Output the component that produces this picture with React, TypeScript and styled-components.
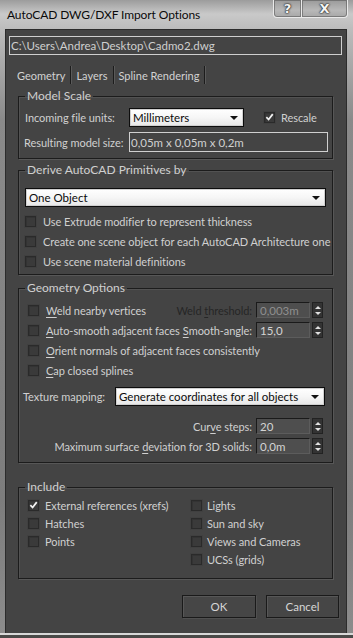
import React from "react";
import styled, { createGlobalStyle } from "styled-components";

const FONT = `Lato, "Noto Sans", sans-serif`;

const Global = createGlobalStyle`
  html, body { margin: 0; padding: 0; background: #4a4a48; }
  body { font-family: ${FONT}; }
  * { box-sizing: border-box; }
`;

const Window = styled.div`
  width: 353px;
  height: 635px;
  background: linear-gradient(180deg, #9c9c9c 0px, #c9c9c9 14px, #bcbcbc 29px, #8a8a8a 120px, #7d7d7d 500px, #8c8c8c 635px);
  border-bottom: 2px solid #d8d8d8;
  display: flex;
  flex-direction: column;
`;

const TitleBar = styled.div`
  height: 29px;
  display: flex;
  align-items: flex-start;
  justify-content: space-between;
  padding-left: 7px;
  flex-shrink: 0;
`;

const Title = styled.div`
  font-family: ${FONT};
  font-size: 12px;
  color: #0a0a0a;
  padding-top: 7px;
  letter-spacing: -0.1px;
`;

const Caps = styled.div`
  display: flex;
  margin-right: 5px;
`;

const CapButton = styled.div<{ $w: number; $right?: boolean }>`
  width: ${(p) => p.$w}px;
  height: 18px;
  border: 1px solid #e9e9e9;
  border-top: none;
  border-left: ${(p) => (p.$right ? "none" : "1px solid #e9e9e9")};
  border-radius: ${(p) => (p.$right ? "0 0 4px 0" : "0 0 0 4px")};
  background: linear-gradient(180deg, #9a9a9a, #b8b8b8 60%, #a8a8a8);
  box-shadow: inset 0 0 0 1px rgba(90, 90, 90, 0.6);
  display: flex;
  align-items: center;
  justify-content: center;
  font-family: "DejaVu Sans", sans-serif;
  font-weight: bold;
  font-size: 13px;
  color: #f4f4f4;
  text-shadow: 0 0 1px #222, 0 0 2px #333, 0 0 2px #333;
`;

const Client = styled.div`
  flex: 1;
  margin: 0 6px 0 5px;
  background: #444444;
  border: 1px solid #2c2c2c;
  border-bottom: none;
  display: flex;
  flex-direction: column;
  padding: 6px 4px 0 3px;
  font-family: ${FONT};
  font-size: 11px;
  color: #d2d2d2;
`;

const PathField = styled.div`
  height: 19px;
  border: 1px solid #cfcfcf;
  padding: 0 0 0 1px;
  display: flex;
  align-items: center;
  color: #cfcfcf;
  font-size: 11.5px;
`;

const TabRow = styled.div`
  display: flex;
  height: 20px;
  margin-top: 10px;
  margin-left: 5px;
  align-items: center;
`;

const Tab = styled.div<{ $first?: boolean }>`
  height: 18px;
  display: flex;
  align-items: center;
  padding: 0 5px 0 ${(p) => (p.$first ? 3 : 5)}px;
  border-right: 1px solid #1c1c1c;
  box-shadow: 1px 0 0 #5a5a5a;
  color: #d2d2d2;
  font-size: 11px;
`;

const Panel = styled.div`
  display: flex;
  flex-direction: column;
  padding: 0 9px 0 9px;
`;

const Group = styled.fieldset<{ $mt: number; $pt: number; $pb: number }>`
  margin: ${(p) => p.$mt}px 0 0 0;
  border: 1px solid #1c1c1c;
  box-shadow: 1px 1px 0 #575757, inset 1px 1px 0 #525252;
  padding: ${(p) => p.$pt}px 4px ${(p) => p.$pb}px 4px;
  min-width: 0;
  display: flex;
  flex-direction: column;
`;

const Legend = styled.legend`
  font-family: ${FONT};
  font-size: 12px;
  line-height: 14px;
  color: #d0d0d0;
  padding: 0 2px;
  margin-left: 2px;
`;

const Row = styled.div<{ $h?: number; $mt?: number; $pl?: number; $end?: boolean }>`
  display: flex;
  align-items: center;
  height: ${(p) => p.$h ?? 20}px;
  margin-top: ${(p) => p.$mt ?? 0}px;
  padding-left: ${(p) => p.$pl ?? 0}px;
  ${(p) => (p.$end ? "justify-content: flex-end; padding-right: 5px;" : "")}
  white-space: nowrap;
`;

const Label = styled.span<{ $w?: number; $grow?: boolean; $right?: boolean; $disabled?: boolean }>`
  ${(p) => (p.$w ? `width: ${p.$w}px; flex-shrink: 0;` : "")}
  ${(p) => (p.$grow ? "flex: 1;" : "")}
  ${(p) => (p.$right ? "text-align: right; padding-right: 4px;" : "")}
  color: ${(p) => (p.$disabled ? "#262626" : "#d0d0d0")};
  font-size: 11px;
  letter-spacing: -0.06px;
  u { text-decoration-thickness: 1px; text-underline-offset: 2px; }
`;

const Spacer = styled.span<{ $w: number }>`
  width: ${(p) => p.$w}px;
  flex-shrink: 0;
`;

const Select = styled.div<{ $w?: number; $h?: number; $mr?: number }>`
  ${(p) => (p.$w ? `width: ${p.$w}px;` : "flex: 1;")}
  height: ${(p) => p.$h ?? 19}px;
  margin-right: ${(p) => p.$mr ?? 0}px;
  background: linear-gradient(180deg, #ffffff 0%, #f6f6f6 50%, #e6e6e6 100%);
  border: 1px solid #0d0d0d;
  box-shadow: inset 0 0 0 1px #cfcfcf;
  display: flex;
  align-items: center;
  justify-content: space-between;
  padding: 0 5px 0 3px;
  color: #0a0a0a;
  font-size: 11.5px;
  flex-shrink: 0;
`;

const Caret = styled.span`
  width: 0;
  height: 0;
  border-left: 4px solid transparent;
  border-right: 4px solid transparent;
  border-top: 4px solid #111;
  margin-top: 1px;
`;

const OutlineField = styled.div`
  flex: 1;
  height: 20px;
  border: 1px solid #d0d0d0;
  display: flex;
  align-items: center;
  padding-left: 1px;
  color: #d0d0d0;
  font-size: 11.5px;
`;

const BoxWrap = styled.span<{ $mr: number }>`
  width: 11px;
  height: 11px;
  flex-shrink: 0;
  margin-right: ${(p) => p.$mr}px;
  background: #3a3a3a;
  border: 1px solid #2a2a2a;
  box-shadow: inset 1px 1px 0 #333, 0 0 0 1px #404040;
  display: flex;
  align-items: center;
  justify-content: center;
`;

const Check = ({ checked, mr = 7 }: { checked?: boolean; mr?: number }) => (
  <BoxWrap $mr={mr}>
    {checked && (
      <svg width="10" height="10" viewBox="0 0 10 10">
        <path d="M1.5 5.2 L4 7.8 L8.6 1.8" fill="none" stroke="#f2f2f2" strokeWidth="1.9" />
      </svg>
    )}
  </BoxWrap>
);

const NumField = styled.div<{ $dim?: boolean }>`
  width: 54px;
  height: 16px;
  flex-shrink: 0;
  background: #4e4e4e;
  border: 1px solid #1a1a1a;
  border-right-color: #5c5c5c;
  border-bottom-color: #5c5c5c;
  display: flex;
  align-items: center;
  padding-left: 3px;
  color: ${(p) => (p.$dim ? "#8e8e8e" : "#d4d4d4")};
  font-size: 11.5px;
`;

const SpinBox = styled.div`
  width: 11px;
  height: 16px;
  margin-left: 2px;
  flex-shrink: 0;
  background: #333;
  border: 1px solid #222;
  display: flex;
  flex-direction: column;
  align-items: center;
  justify-content: space-around;
  padding: 1px 0;
`;

const Arrow = styled.span<{ $up?: boolean }>`
  width: 0;
  height: 0;
  border-left: 3px solid transparent;
  border-right: 3px solid transparent;
  ${(p) => (p.$up ? "border-bottom: 3px solid #e0e0e0;" : "border-top: 3px solid #e0e0e0;")}
`;

const Spinner = ({ value, dim }: { value: string; dim?: boolean }) => (
  <>
    <NumField $dim={dim}>{value}</NumField>
    <SpinBox>
      <Arrow $up />
      <Arrow />
    </SpinBox>
  </>
);

const Columns = styled.div`
  display: flex;
  padding-left: 5px;
`;

const Column = styled.div<{ $w?: number }>`
  display: flex;
  flex-direction: column;
  ${(p) => (p.$w ? `width: ${p.$w}px;` : "flex: 1;")}
`;

const ButtonRow = styled.div`
  display: flex;
  justify-content: flex-end;
  gap: 10px;
  margin-top: 16px;
  padding-right: 3px;
`;

const Button = styled.div<{ $w: number }>`
  width: ${(p) => p.$w}px;
  height: 23px;
  border: 1px solid #1a1a1a;
  box-shadow: inset 1px 1px 0 #575757, 1px 1px 0 #505050;
  background: #464646;
  display: flex;
  align-items: center;
  justify-content: center;
  color: #d6d6d6;
  font-size: 11.5px;
`;

export default function App() {
  return (
    <>
      <Global />
      <Window>
        <TitleBar>
          <Title>AutoCAD DWG/DXF Import Options</Title>
          <Caps>
            <CapButton $w={29}>?</CapButton>
            <CapButton $w={46} $right>
              X
            </CapButton>
          </Caps>
        </TitleBar>
        <Client>
          <PathField>C:\Users\Andrea\Desktop\Cadmo2.dwg</PathField>
          <TabRow>
            <Tab $first>Geometry</Tab>
            <Tab>Layers</Tab>
            <Tab>Spline Rendering</Tab>
          </TabRow>
          <Panel>
            <Group $mt={4} $pt={4} $pb={6}>
              <Legend>Model Scale</Legend>
              <Row $pl={2}>
                <Label $w={104}>Incoming file units:</Label>
                <Select $w={115} $h={19}>
                  Millimeters
                  <Caret />
                </Select>
                <Spacer $w={20} />
                <Check checked mr={6} />
                <Label>Rescale</Label>
              </Row>
              <Row $mt={5} $pl={1}>
                <Label $w={105}>Resulting model size:</Label>
                <OutlineField>0,05m x 0,05m x 0,2m</OutlineField>
              </Row>
            </Group>

            <Group $mt={4} $pt={11} $pb={3}>
              <Legend>Derive AutoCAD Primitives by</Legend>
              <Row $h={19} $pl={2}>
                <Select $h={19} $mr={2}>
                  One Object
                  <Caret />
                </Select>
              </Row>
              <Row $mt={4} $pl={2}>
                <Check />
                <Label>Use Extrude modifier to represent thickness</Label>
              </Row>
              <Row $pl={2}>
                <Check />
                <Label>Create one scene object for each AutoCAD Architecture one</Label>
              </Row>
              <Row $pl={2}>
                <Check />
                <Label>Use scene material definitions</Label>
              </Row>
            </Group>

            <Group $mt={6} $pt={5} $pb={6}>
              <Legend>Geometry Options</Legend>
              <Row $pl={5}>
                <Check />
                <Label $grow>
                  <u>W</u>eld nearby vertices
                </Label>
                <Label $right $disabled>
                  Weld <u>t</u>hreshold:
                </Label>
                <Spinner value="0,003m" dim />
                <Spacer $w={5} />
              </Row>
              <Row $pl={5}>
                <Check />
                <Label $grow>
                  <u>A</u>uto-smooth adjacent faces
                </Label>
                <Label $right>
                  <u>S</u>mooth-angle:
                </Label>
                <Spinner value="15,0" />
                <Spacer $w={5} />
              </Row>
              <Row $pl={5}>
                <Check />
                <Label>
                  <u>O</u>rient normals of adjacent faces consistently
                </Label>
              </Row>
              <Row $pl={5}>
                <Check />
                <Label>
                  <u>C</u>ap closed splines
                </Label>
              </Row>
              <Row $h={19} $mt={7}>
                <Label $w={92}>Texture mapping:</Label>
                <Select $h={19} $mr={3}>
                  Generate coordinates for all objects
                  <Caret />
                </Select>
              </Row>
              <Row $mt={10} $end>
                <Label $right>
                  Cur<u>v</u>e steps:
                </Label>
                <Spinner value="20" />
              </Row>
              <Row $end>
                <Label $right>
                  Maximum surface <u>d</u>eviation for 3D solids:
                </Label>
                <Spinner value="0,0m" />
              </Row>
            </Group>

            <Group $mt={17} $pt={2} $pb={10}>
              <Legend>Include</Legend>
              <Columns>
                <Column $w={163}>
                  <Row $h={18}>
                    <Check mr={6} checked />
                    <Label>External references (xrefs)</Label>
                  </Row>
                  <Row $h={18}>
                    <Check mr={6} />
                    <Label>Hatches</Label>
                  </Row>
                  <Row $h={18}>
                    <Check mr={6} />
                    <Label>Points</Label>
                  </Row>
                </Column>
                <Column>
                  <Row $h={18}>
                    <Check mr={5} />
                    <Label>Lights</Label>
                  </Row>
                  <Row $h={18}>
                    <Check mr={5} />
                    <Label>Sun and sky</Label>
                  </Row>
                  <Row $h={18}>
                    <Check mr={5} />
                    <Label>Views and Cameras</Label>
                  </Row>
                  <Row $h={18}>
                    <Check mr={5} />
                    <Label>UCSs (grids)</Label>
                  </Row>
                </Column>
              </Columns>
            </Group>
          </Panel>
          <ButtonRow>
            <Button $w={74}>OK</Button>
            <Button $w={73}>Cancel</Button>
          </ButtonRow>
        </Client>
      </Window>
    </>
  );
}
